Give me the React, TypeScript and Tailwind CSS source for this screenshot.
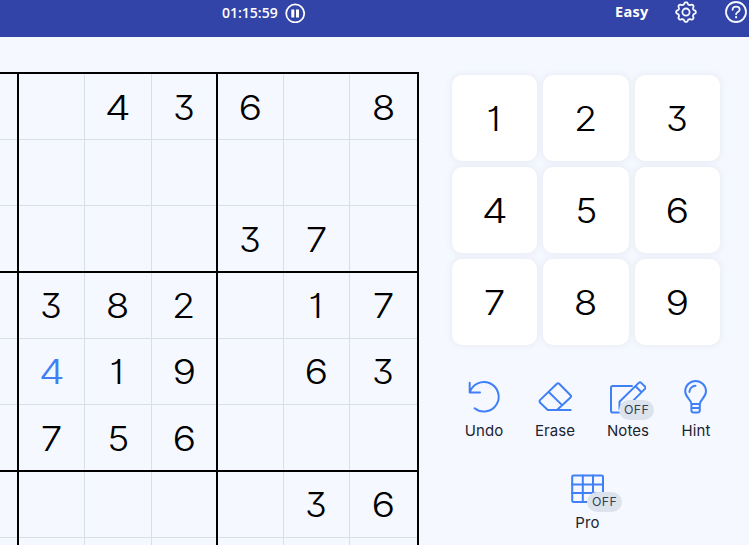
import React from "react";

const BOARD = ["..436.8", ".......", "....37.", ".382.17", ".419.63", ".756...", ".....36", "......."];

// Thick lines separate the 3x3 boxes; thin lines separate the cells inside them.
const COLUMNS = [
  { box: "border-r-2", cell: "" },
  { box: "", cell: "border-r" },
  { box: "", cell: "border-r" },
  { box: "border-r-2", cell: "" },
  { box: "", cell: "border-r" },
  { box: "", cell: "border-r" },
  { box: "border-r-2", cell: "" },
];
const ROWS = [
  { box: "", cell: "border-b pt-[2px]" },
  { box: "", cell: "border-b" },
  { box: "border-b-2", cell: "pt-[2px]" },
  { box: "", cell: "border-b" },
  { box: "", cell: "border-b" },
  { box: "border-b-2", cell: "pt-[2px]" },
  { box: "", cell: "border-b" },
  { box: "", cell: "" },
];

const DIGIT_SCALE: Record<string, string> = {
  "1": "scale-x-[1.06] -translate-x-px",
  "2": "scale-x-[1.1]",
  "3": "scale-x-[1.04] -translate-x-[0.5px]",
  "4": "scale-x-[1.2]",
  "5": "scale-x-[1.08]",
  "6": "scale-x-[1.14]",
  "7": "scale-x-[1.12]",
  "8": "scale-x-[1.12]",
  "9": "scale-x-[1.14]",
};

function Digit({ value, blue }: { value: string; blue?: boolean }) {
  return (
    <span
      className={`block text-[34.5px] leading-[36px] font-[340] [font-feature-settings:'cv01','cv09'] ${DIGIT_SCALE[value]} ${blue ? "text-[#4080f7]" : "text-black"}`}
    >
      {value}
    </span>
  );
}

function Board() {
  return (
    <div className="mt-[35px] grid h-[473px] w-[419px] shrink-0 grid-cols-[19px_66px_67px_66px_66px_66px_69px] grid-rows-[66px_66px_67px_66px_66px_67px_66px_7px] border-t-2 border-black">
      {BOARD.flatMap((row, r) =>
        row.split("").map((value, c) => (
          <div key={`${r}-${c}`} className={`border-black ${COLUMNS[c].box} ${ROWS[r].box}`}>
            <div className={`flex h-full w-full items-center justify-center border-[#d8dfea] ${COLUMNS[c].cell} ${ROWS[r].cell}`}>
              {value !== "." && <Digit value={value} blue={r === 4 && c === 1} />}
            </div>
          </div>
        )),
      )}
    </div>
  );
}

const iconProps = {
  fill: "none",
  stroke: "#4080f7",
  strokeWidth: 2,
  strokeLinecap: "round" as const,
  strokeLinejoin: "round" as const,
  className: "block h-9 w-9",
  viewBox: "0 0 36 36",
};

function UndoIcon() {
  return (
    <svg {...iconProps}>
      <path d="M3.7 3.8v9.7h10.3M3.7 13.5A14.8 14.8 0 1 1 8.6 29.3" />
    </svg>
  );
}
function EraseIcon() {
  return (
    <svg {...iconProps}>
      <path d="M10.7 31 3.2 23.8c-.9-.9-.9-2 0-2.9L19.9 4.8c.8-.7 1.5-.7 2.3 0L33.5 16.2c.8.8.8 1.5 0 2.2L20 31M12 13.2l12.8 12.7M10.7 31h23" />
    </svg>
  );
}
function NotesIcon() {
  return (
    <svg {...iconProps}>
      <path d="M22 6.9H2.8c-1 0-1.8.8-1.8 1.8v23c0 1 .8 1.8 1.8 1.8H28M9.5 30.2V22.7L28.7 3.9c.9-.8 1.7-.8 2.5 0l3.7 3.6c.8.8.8 1.6 0 2.4L16.5 28.4 9.5 30.2M25.5 7.2l6 6" />
    </svg>
  );
}
function HintIcon() {
  return (
    <svg {...iconProps}>
      <path d="M13.4 24.9c-.5-4.7-6.2-6.4-6.2-12.6a10.4 10.4 0 0 1 20.8 0c0 6.2-5.6 7.9-6.2 12.6Zm0 0v6.1c0 1.5.7 2.5 2.2 2.5h4c1.5 0 2.2-1 2.2-2.5v-6.1M13.4 29h8.4M11.4 12.9a6.3 6.3 0 0 1 6.1-6.1" />
    </svg>
  );
}
function ProIcon() {
  return (
    <svg {...iconProps}>
      <rect x="2.2" y="4.5" width="30.8" height="26.5" rx="1.3" />
      <path d="M12.8 4.5v26.5M23 4.5v26.5M2.2 13.5h30.8M2.2 22h30.8" />
    </svg>
  );
}

// Outline of an eight-lobed gear, sampled around its centre.
const GEAR = Array.from({ length: 96 }, (_, i) => {
  const t = (i / 96) * Math.PI * 2;
  const r = 8.8 + 1.1 * Math.tanh(1.6 * Math.cos(8 * t));
  return `${(11 + r * Math.cos(t)).toFixed(2)},${(11.1 + r * Math.sin(t)).toFixed(2)}`;
}).join(" ");

function Tool({ label, icon, className, off }: { label: string; icon: React.ReactNode; className: string; off?: string }) {
  return (
    <div className={`flex flex-col items-center ${className}`}>
      <div className="relative">
        {icon}
        {off && (
          <span className={`absolute flex h-5 w-[35px] items-center justify-center rounded-full bg-[#dce3ed] text-[12.3px] tracking-[0.4px] text-[#344052] ${off}`}>
            OFF
          </span>
        )}
      </div>
      <span className="mt-[7px] text-[15px] leading-[18px] font-[370] tracking-[0.1px] text-[#1c2432]">{label}</span>
    </div>
  );
}

export default function App() {
  return (
    <div className="h-[545px] w-[749px] overflow-hidden bg-[#f5f8ff] font-['Inter',sans-serif]">
      <header className="flex h-[37px] items-start bg-[#3244a8] font-['Open_Sans',sans-serif] text-white">
        <span className="ml-[222px] mt-[3px] w-[63px] text-[14px] leading-5 font-semibold">01:15:59</span>
        <svg className="mt-[3px] h-5 w-5 shrink-0" viewBox="0 0 20 20">
          <circle cx="10.2" cy="10.4" r="9" fill="none" stroke="#fff" strokeWidth="1.7" />
          <path d="M6.3 6.4h3v8h-3zM11 6.4h3v8h-3z" fill="#fff" />
        </svg>
        <span className="ml-[310px] mt-[2px] w-[60px] text-[14.5px] leading-5 font-bold tracking-[0.3px]">Easy</span>
        <svg className="mt-px h-[22px] w-[22px] shrink-0" viewBox="0 0 22 22" fill="none" stroke="#f5f8ff" strokeWidth="1.8" strokeLinejoin="round">
          <polygon points={GEAR} />
          <circle cx="11" cy="11.1" r="3.6" />
        </svg>
        <svg className="ml-[28px] mt-px h-[22px] w-[22px] shrink-0" viewBox="0 0 22 22" fill="none" stroke="#f5f8ff" strokeWidth="1.8" strokeLinecap="round">
          <circle cx="11" cy="11" r="10" />
          <path d="M7.6 8.8c0-4.4 7.1-4.2 7.1-.2 0 2.4-3.6 2.4-3.6 4.7" />
          <path d="M11.1 16.2v.1" strokeWidth="2.2" />
        </svg>
      </header>

      <main className="flex h-[508px] items-start">
        <Board />
        <aside className="ml-[33px] w-[297px] shrink-0 pt-[38px]">
          <div className="grid w-[268px] grid-cols-[85px_86px_85px] auto-rows-[86px] gap-[6px]">
            {"123456789".split("").map((n) => (
              <button key={n} className="flex items-center justify-center rounded-[10px] bg-white pt-px shadow-[0_0_6px_1px_#e8ebf3]">
                <Digit value={n} />
              </button>
            ))}
          </div>
          <div className="mt-[34px] flex">
            <Tool label="Undo" icon={<UndoIcon />} className="-ml-[2px] w-[68px]" />
            <Tool label="Erase" icon={<EraseIcon />} className="w-[74px]" />
            <Tool label="Notes" icon={<NotesIcon />} className="w-[72px]" off="left-[9px] top-[21px]" />
            <Tool label="Hint" icon={<HintIcon />} className="w-[64px]" />
          </div>
          <Tool label="Pro" icon={<ProIcon />} className="mt-[31px] w-[271px]" off="left-[17.5px] top-[21px]" />
        </aside>
      </main>
    </div>
  );
}
